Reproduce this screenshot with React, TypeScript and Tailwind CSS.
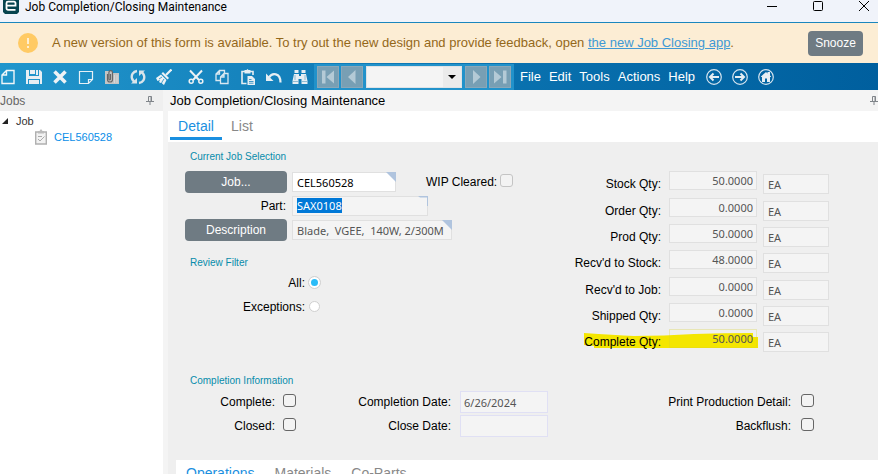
import type { ReactNode } from 'react';

const quantities = [
  { label: 'Stock Qty:', value: '50.0000' },
  { label: 'Order Qty:', value: '0.0000' },
  { label: 'Prod Qty:', value: '50.0000' },
  { label: "Recv'd to Stock:", value: '48.0000' },
  { label: "Recv'd to Job:", value: '0.0000' },
  { label: 'Shipped Qty:', value: '0.0000' },
  { label: 'Complete Qty:', value: '50.0000', marked: true },
];

const menus = ['File', 'Edit', 'Tools', 'Actions', 'Help'];

const fieldFont = "font-['Noto_Sans',sans-serif] text-[11px]";
const readonlyField = `${fieldFont} border border-[#e0e0e0] bg-[#f4f4f4] text-[#555] outline-none`;

const editIcons: { name: string; body: ReactNode }[] = [
  {
    name: 'New',
    body: <path d="M6.5 1.5H14v13H2V6zM6.5 1.5V6H2" fill="none" stroke="#f2f6f8" strokeWidth="1.4" />,
  },
  {
    name: 'Save',
    body: (
      <path
        d="M0 1h3v6h10V1h1l2 2v12h-2v-5H2v5H0zM4 1h5v4H4zM10 1h2v5h-2zM3 11h10v4H3z"
        fill="#e6eef3"
      />
    ),
  },
  {
    name: 'Delete',
    body: <path d="M2.5 2.5l11 11M13.5 2.5l-11 11" stroke="#edf2f5" strokeWidth="3.6" />,
  },
  {
    name: 'Memo',
    body: <path d="M1.5 2.5h13v8l-4 4h-9zM10.5 14.5v-4h4" fill="none" stroke="#e6f0f6" strokeWidth="1.2" />,
  },
  {
    name: 'Attachments',
    body: (
      <>
        <path d="M1 2h7l1 2h6v11H1z" fill="#c4c4c4" />
        <path
          d="M3.5 5v5.5a2.5 2.5 0 0 0 5 0V3.5a1.8 1.8 0 0 0-3.6 0V10a.8.8 0 0 0 1.6 0V5"
          fill="none"
          stroke="#666"
          strokeWidth="1.2"
        />
        <path d="M10.5 6v8M13 6v8" stroke="#d8d8d8" />
      </>
    ),
  },
  {
    name: 'Refresh',
    body: (
      <>
        <path d="M7 2C3 2.5 1 6 2 9.5c.5 1.5 1.2 2.5 2.5 3.5M9 14c4-.5 6-4 5-7.5-.5-1.5-1.2-2.5-2.5-3.5" fill="none" stroke="#d9e4ea" strokeWidth="2.4" />
        <path d="M1 14.5h6V9zM15 1.5H9V7z" fill="#d9e4ea" />
      </>
    ),
  },
  {
    name: 'Clear',
    body: (
      <>
        <path d="M15.5.5L10 6" stroke="#edf2f5" strokeWidth="2.2" />
        <path d="M7 3l6 6-1.5 1.5-6-6z" fill="#edf2f5" />
        <path d="M5 5.5l5.500 5.500-2.500 5-2-1.500.5-1.500-2 1-1.500-1 1-2-2.500 1-1.500-3z" fill="#edf2f5" />
        <path d="M6 8l-3 2M8 10l-2 3" stroke="#1b88c2" strokeWidth=".8" />
      </>
    ),
  },
  {
    name: 'Cut',
    body: (
      <g fill="none" stroke="#edf2f5">
        <path d="M2 1.5l9 9.5M14 1.5L5 11" strokeWidth="2" />
        <circle cx="3.2" cy="12.2" r="2" strokeWidth="1.5" />
        <circle cx="12.8" cy="12.2" r="2" strokeWidth="1.5" />
      </g>
    ),
  },
  {
    name: 'Copy',
    body: (
      <g fill="none" stroke="#d9e8f1" strokeWidth="1.3">
        <path d="M6 11.5H2V5l3.500-3.500h5V4M5.500 1.500V5H2" />
        <path d="M6.500 8L10 4.500h4v10H6.500zM10 4.500V8H6.500" />
      </g>
    ),
  },
  {
    name: 'Paste',
    body: (
      <>
        <path d="M6.5 14.5H2v-12h11V6" fill="none" stroke="#e6eef3" strokeWidth="1.6" />
        <path d="M4.5 1h2l1-1 1 1h2v3.5h-6z" fill="#e6eef3" />
        <path d="M7.5 7h4.500l3 3v6H7.500z" fill="#e6eef3" />
        <path d="M9 10.5h2.500M9 12.500h4.500M9 14.200h4.500" stroke="#1b84bd" strokeWidth=".8" />
      </>
    ),
  },
  {
    name: 'Undo',
    body: (
      <>
        <path d="M3 8.5C6 3.5 14.5 3.5 14.5 13.5" fill="none" stroke="#e6eef3" strokeWidth="2.2" />
        <path d="M0 4.5v7.500h7.500z" fill="#e6eef3" />
      </>
    ),
  },
  {
    name: 'Find',
    body: (
      <>
        <path d="M2.5 1h4v3h-4zM9.500 1h4v3h-4zM2 5h5v2h2V5h5l1.500 7v3h-6v-5h-3v5h-6v-3z" fill="#e6eef3" />
        <path d="M3 6v5M13 6v5M.5 12.500h6M9.500 12.500h6" stroke="#78aecb" strokeWidth=".8" />
      </>
    ),
  },
];

function PinIcon() {
  return (
    <svg viewBox="0 0 8 9" className="h-[9px] w-2 shrink-0" aria-hidden="true">
      <path d="M2.5 5V.5h3V5M5 .5v5M0 5.5h8M4 5.5V9" fill="none" stroke="#80858a" />
    </svg>
  );
}

function NavButton({ name, d }: { name: string; d: string }) {
  return (
    <button aria-label={name} className="grid h-[22px] w-[22px] place-items-center border border-[#8aa7b8] bg-[#789fb4]">
      <svg viewBox="0 0 16 16" className="size-4">
        <path d={d} fill="#b4cad6" />
      </svg>
    </button>
  );
}

function RoundButton({ name, children }: { name: string; children: ReactNode }) {
  return (
    <button aria-label={name}>
      <svg viewBox="0 0 16 16" className="size-4">
        <circle cx="8" cy="8" r="7.3" fill="none" stroke="#d5e4ef" strokeWidth="1.2" />
        {children}
      </svg>
    </button>
  );
}

function Corner() {
  return (
    <svg viewBox="0 0 10 10" className="absolute top-0 right-0 size-[10px]" aria-hidden="true">
      <path d="M0 0h10v10z" fill="#b0c4de" />
    </svg>
  );
}

function TitleBar() {
  return (
    <header className="flex h-[23px] items-start justify-between border-b border-[#1b86bd] bg-[#f0f3fa] pl-[3px]">
      <div className="flex items-start gap-[6px]">
        <svg viewBox="0 0 16 14" className="h-[14px] w-4" aria-hidden="true">
          <path d="M0 0h16v12l-2 2H2l-2-2z" fill="#06444f" />
          <path d="M12.5 9.8H5a1.5 1.5 0 0 1-1.5-1.5V3.2A1.5 1.5 0 0 1 5 1.7h6a1.5 1.5 0 0 1 1.5 1.5v2.5h-9" fill="none" stroke="#fff" strokeWidth="1.8" />
        </svg>
        <h1 className="font-[Roboto,sans-serif] text-xs leading-[15px] text-black">Job Completion/Closing Maintenance</h1>
      </div>
      <div className="flex items-start gap-9 pr-[9px]">
        <button aria-label="Minimize">
          <svg viewBox="0 0 10 12" className="h-3 w-[10px]"><path d="M0 6.5h10" stroke="#000" /></svg>
        </button>
        <button aria-label="Maximize">
          <svg viewBox="0 0 10 12" className="h-3 w-[10px]"><rect x=".5" y="1.5" width="9" height="9" rx="1" fill="none" stroke="#000" /></svg>
        </button>
        <button aria-label="Close">
          <svg viewBox="0 0 10 12" className="h-3 w-[10px]"><path d="M0 1l10 10M10 1L0 11" stroke="#000" /></svg>
        </button>
      </div>
    </header>
  );
}

function Banner() {
  return (
    <div className="flex h-10 items-center bg-[#fcedd4] pr-[15px] pl-[18px]">
      <svg viewBox="0 0 20 20" className="size-5 shrink-0" aria-hidden="true">
        <circle cx="10" cy="10" r="10" fill="#ffca64" />
        <path d="M10 5v6M10 13v2" stroke="#fff3dd" strokeWidth="1.8" />
      </svg>
      <p className="ml-[14px] flex-1 text-[13px] text-[#94681a]">
        A new version of this form is available. To try out the new design and provide feedback, open{' '}
        <a href="#" className="text-[#4099d4] underline">the new Job Closing app</a>.
      </p>
      <button className="h-[25px] w-[55px] rounded bg-[#6f7b83] text-xs text-white">Snooze</button>
    </div>
  );
}

function Toolbar() {
  return (
    <nav className="flex h-[27px] items-center bg-linear-to-r from-[#2196cc] via-[#0c75b2] to-[#005f9e]">
      <div className="flex items-center gap-[10px]">
        {editIcons.map(icon => (
          <button key={icon.name} aria-label={icon.name} className={icon.name === 'Cut' ? 'ml-[6px]' : ''}>
            <svg viewBox="0 0 16 16" className="size-4">{icon.body}</svg>
          </button>
        ))}
      </div>
      <div className="ml-[6px] flex h-[26px] items-center gap-[2px] bg-[#2292ca] px-[3px]">
        <NavButton name="First" d="M2 1.5h3.5v13H2zM14 1.5v13L6.5 8z" />
        <NavButton name="Previous" d="M11.5 1v14L4 8z" />
        <div className="relative mx-[1px]">
          <select aria-label="Record" className="block h-[22px] w-24 appearance-none border border-[#dfe3e6] bg-[#f4f4f4]">
            <option></option>
          </select>
          <svg viewBox="0 0 18 20" className="pointer-events-none absolute top-[1px] right-[1px] h-5 w-[18px]" aria-hidden="true">
            <path d="M0 0h18v20H0z" fill="#ebebeb" />
            <path d="M5 8h8l-4 4z" fill="#000" />
          </svg>
        </div>
        <NavButton name="Next" d="M5 1v14l7.5-7z" />
        <NavButton name="Last" d="M11 1.5h3.5v13H11zM2 1.5v13L9.5 8z" />
      </div>
      <div className="ml-[6px] flex items-center gap-2 text-[13px] text-white">
        {menus.map(menu => (
          <button key={menu}>{menu}</button>
        ))}
      </div>
      <div className="ml-[11px] flex items-center gap-[10px]">
        <RoundButton name="Back">
          <path d="M13 8H4M7.5 4.5L4 8l3.5 3.5" fill="none" stroke="#e6eef3" strokeWidth="2" />
        </RoundButton>
        <RoundButton name="Forward">
          <path d="M3 8h9M8.5 4.5L12 8l-3.5 3.5" fill="none" stroke="#e6eef3" strokeWidth="2" />
        </RoundButton>
        <RoundButton name="Home">
          <path d="M3 7.5l5-4.5 1.5 1.5V3H12v3.5l1 1V8h-1v5H9V9.5H7V13H4V8H3z" fill="#e6eef3" />
        </RoundButton>
      </div>
    </nav>
  );
}

function JobTree() {
  return (
    <aside className="w-[163px] shrink-0 bg-white">
      <div className="flex h-[21px] items-center justify-between bg-[#efefef] pr-[9px]">
        <h2 className="text-xs text-[#666]">Jobs</h2>
        <PinIcon />
      </div>
      <ul className="text-[11px]">
        <li>
          <div className="flex h-5 items-center gap-2 pl-[2px] text-[#333]">
            <svg viewBox="0 0 6 6" className="size-[6px]" aria-hidden="true"><path d="M6 0v6H0z" fill="#222" /></svg>
            Job
          </div>
          <ul>
            <li className="flex h-3 items-center gap-[7px] pl-[35px]">
              <svg viewBox="0 0 12 16" className="h-4 w-3" aria-hidden="true">
                <path d="M.7 3h10.6v12H.7z" fill="#f2f2f2" stroke="#b0b0b0" strokeWidth="1.4" />
                <path d="M3 4.5V2h1.5L6 0l1.5 2H9v2.5z" fill="#bbb" />
                <path d="M3 7.5h4M3 10l2 2 4.5-4.5" fill="none" stroke="#aaa" />
              </svg>
              <a href="#" className="text-[#0a8ee8]">CEL560528</a>
            </li>
          </ul>
        </li>
      </ul>
    </aside>
  );
}

function GroupTitle({ children }: { children: ReactNode }) {
  return <h3 className="text-[10px] leading-4 text-[#078cab]">{children}</h3>;
}

function JobSelection() {
  return (
    <section>
      <div className="pl-[22px]"><GroupTitle>Current Job Selection</GroupTitle></div>
      <div className="mt-[6px] grid grid-cols-[102px_1fr] items-center gap-x-[5px] gap-y-[2px] pl-[17px]">
        <button className="h-[22px] rounded bg-[#6f7b83] text-xs text-white">Job...</button>
        <div className="flex items-center">
          <div className="relative">
            <input aria-label="Job" defaultValue="CEL560528" className={`${fieldFont} block h-5 w-[104px] border border-[#e0e0e0] bg-white px-1 text-black`} />
            <Corner />
          </div>
          <label className="ml-[30px] flex items-center gap-[3px]">
            WIP Cleared:
            <input type="checkbox" disabled className="mb-[3px] size-[13px] appearance-none rounded-[3px] border border-[#c4c4c4] bg-[#f3f3f3]" />
          </label>
        </div>
        <label htmlFor="part" className="h-[22px] pr-px text-right leading-[22px]">Part:</label>
        <div className="relative w-[136px]">
          <div id="part" role="textbox" tabIndex={0} className={`${readonlyField} h-5 px-1 leading-[17px]`}>
            <span className="bg-[#0078d7] text-white">SAX0108</span>
          </div>
          <svg viewBox="0 0 10 10" className="absolute top-0 right-0 size-[10px]" aria-hidden="true">
            <path d="M0 0h10v10H9V1.5H2z" fill="#b0c4de" />
          </svg>
        </div>
        <button className="h-[22px] rounded bg-[#6f7b83] text-xs text-white">Description</button>
        <div className="relative w-[160px]">
          <input aria-label="Description" readOnly value="Blade,  VGEE,  140W, 2/300M" className={`${readonlyField} block h-5 w-full px-1`} />
          <Corner />
        </div>
      </div>
    </section>
  );
}

function ReviewFilter() {
  return (
    <section className="mt-[14px]">
      <div className="pl-[22px]"><GroupTitle>Review Filter</GroupTitle></div>
      <div className="flex w-[152px] flex-col items-end">
        {['All:', 'Exceptions:'].map((label, i) => (
          <label key={label} className="flex h-6 items-center gap-1">
            {label}
            <input
              type="radio"
              name="review"
              defaultChecked={i === 0}
              className="mb-[2px] size-[11px] appearance-none rounded-full border border-[#d0d0d0] bg-white checked:border-2 checked:border-white checked:bg-[#2abcf8] checked:outline checked:outline-[#d0d0d0]"
            />
          </label>
        ))}
      </div>
    </section>
  );
}

function Quantities() {
  return (
    <section className="relative flex flex-col gap-[6px] pt-[25px] pr-[49px]">
      <svg viewBox="0 0 174 17" className="absolute right-[120px] bottom-[3px] h-[17px] w-[174px]" aria-hidden="true">
        <path d="M0 1Q30 3 50 4Q80 4 110 2Q140 1 169 1V5H174V16H10V14L0 13z" fill="#f4e600" />
      </svg>
      {quantities.map(q => (
        <div key={q.label} className="relative flex h-5 items-center justify-end nth-[3n]:mt-px">
          <label htmlFor={q.label} className="mr-2">{q.label}</label>
          <input
            id={q.label}
            readOnly
            value={q.value}
            className={
              q.marked
                ? `${fieldFont} mb-[7px] h-[19px] w-[88px] border border-[#d8cf30]/30 bg-transparent px-[3px] text-right text-[#555] outline-none`
                : `${readonlyField} mb-[7px] h-[19px] w-[88px] px-[3px] text-right`
            }
          />
          <input aria-label={`${q.label} unit`} readOnly value="EA" className={`${readonlyField} ml-[6px] h-5 w-[66px] px-1`} />
        </div>
      ))}
    </section>
  );
}

const tickBox = 'mb-1 size-[13px] appearance-none rounded-[3px] border border-[#666] bg-[#f3f3f3]';
const dateBox = `${fieldFont} h-[22px] w-[88px] border border-[#e0e0f4] bg-[#f4f4f4] px-[3px] text-[#555] outline-none`;

function CompletionInfo() {
  return (
    <section className="mt-[21px]">
      <div className="pl-[22px]"><GroupTitle>Completion Information</GroupTitle></div>
      <div className="mt-px flex pr-16">
        <div className="flex w-[128px] flex-col items-end">
          <label className="flex h-6 items-center gap-2">Complete:<input type="checkbox" className={tickBox} /></label>
          <label className="flex h-6 items-center gap-2">Closed:<input type="checkbox" className={tickBox} /></label>
        </div>
        <div className="ml-[59px] flex flex-1 flex-col items-start">
          <label className="flex h-6 items-center gap-[9px]">
            <span className="w-24 text-right">Completion Date:</span>
            <input readOnly value="6/26/2024" className={dateBox} />
          </label>
          <label className="flex h-6 items-center gap-[9px]">
            <span className="w-24 text-right">Close Date:</span>
            <input readOnly value="" className={dateBox} />
          </label>
        </div>
        <div className="flex flex-col items-end">
          <label className="flex h-6 items-center gap-[10px]">Print Production Detail:<input type="checkbox" className={tickBox} /></label>
          <label className="flex h-6 items-center gap-[10px]">Backflush:<input type="checkbox" className={tickBox} /></label>
        </div>
      </div>
    </section>
  );
}

export default function App() {
  return (
    <div className="flex h-screen flex-col overflow-hidden bg-white font-['Liberation_Sans',Arial,sans-serif]">
      <TitleBar />
      <Banner />
      <Toolbar />
      <div className="flex min-h-0 flex-1">
        <JobTree />
        <main className="flex min-w-0 flex-1 flex-col bg-[#f4f4f4]">
          <div className="flex h-[21px] shrink-0 items-center justify-between pl-[7px]">
            <h2 className="text-[13px] text-black">Job Completion/Closing Maintenance</h2>
            <PinIcon />
          </div>
          <div className="ml-[5px] flex h-[31px] shrink-0 items-start bg-white pl-[2px] text-sm">
            <button className="h-[29px] w-[52px] border-b-3 border-[#1a8fe0] pt-1 text-[#1a8fe0]">Detail</button>
            <button className="ml-[9px] h-[29px] border-b-3 border-transparent pt-1 text-[#888]">List</button>
          </div>
          <div className="ml-[5px] flex min-h-0 flex-1 flex-col bg-[#efefef] pt-[7px] text-xs text-black">
            <div className="flex justify-between">
              <div>
                <JobSelection />
                <ReviewFilter />
              </div>
              <Quantities />
            </div>
            <CompletionInfo />
            <div className="mt-[22px] ml-2 flex flex-1 items-start gap-5 bg-white px-[10px] pt-[5px] text-sm leading-4 text-[#888]">
              <button className="text-[#1a8fe0]">Operations</button>
              <button>Materials</button>
              <button>Co-Parts</button>
            </div>
          </div>
        </main>
      </div>
    </div>
  );
}
